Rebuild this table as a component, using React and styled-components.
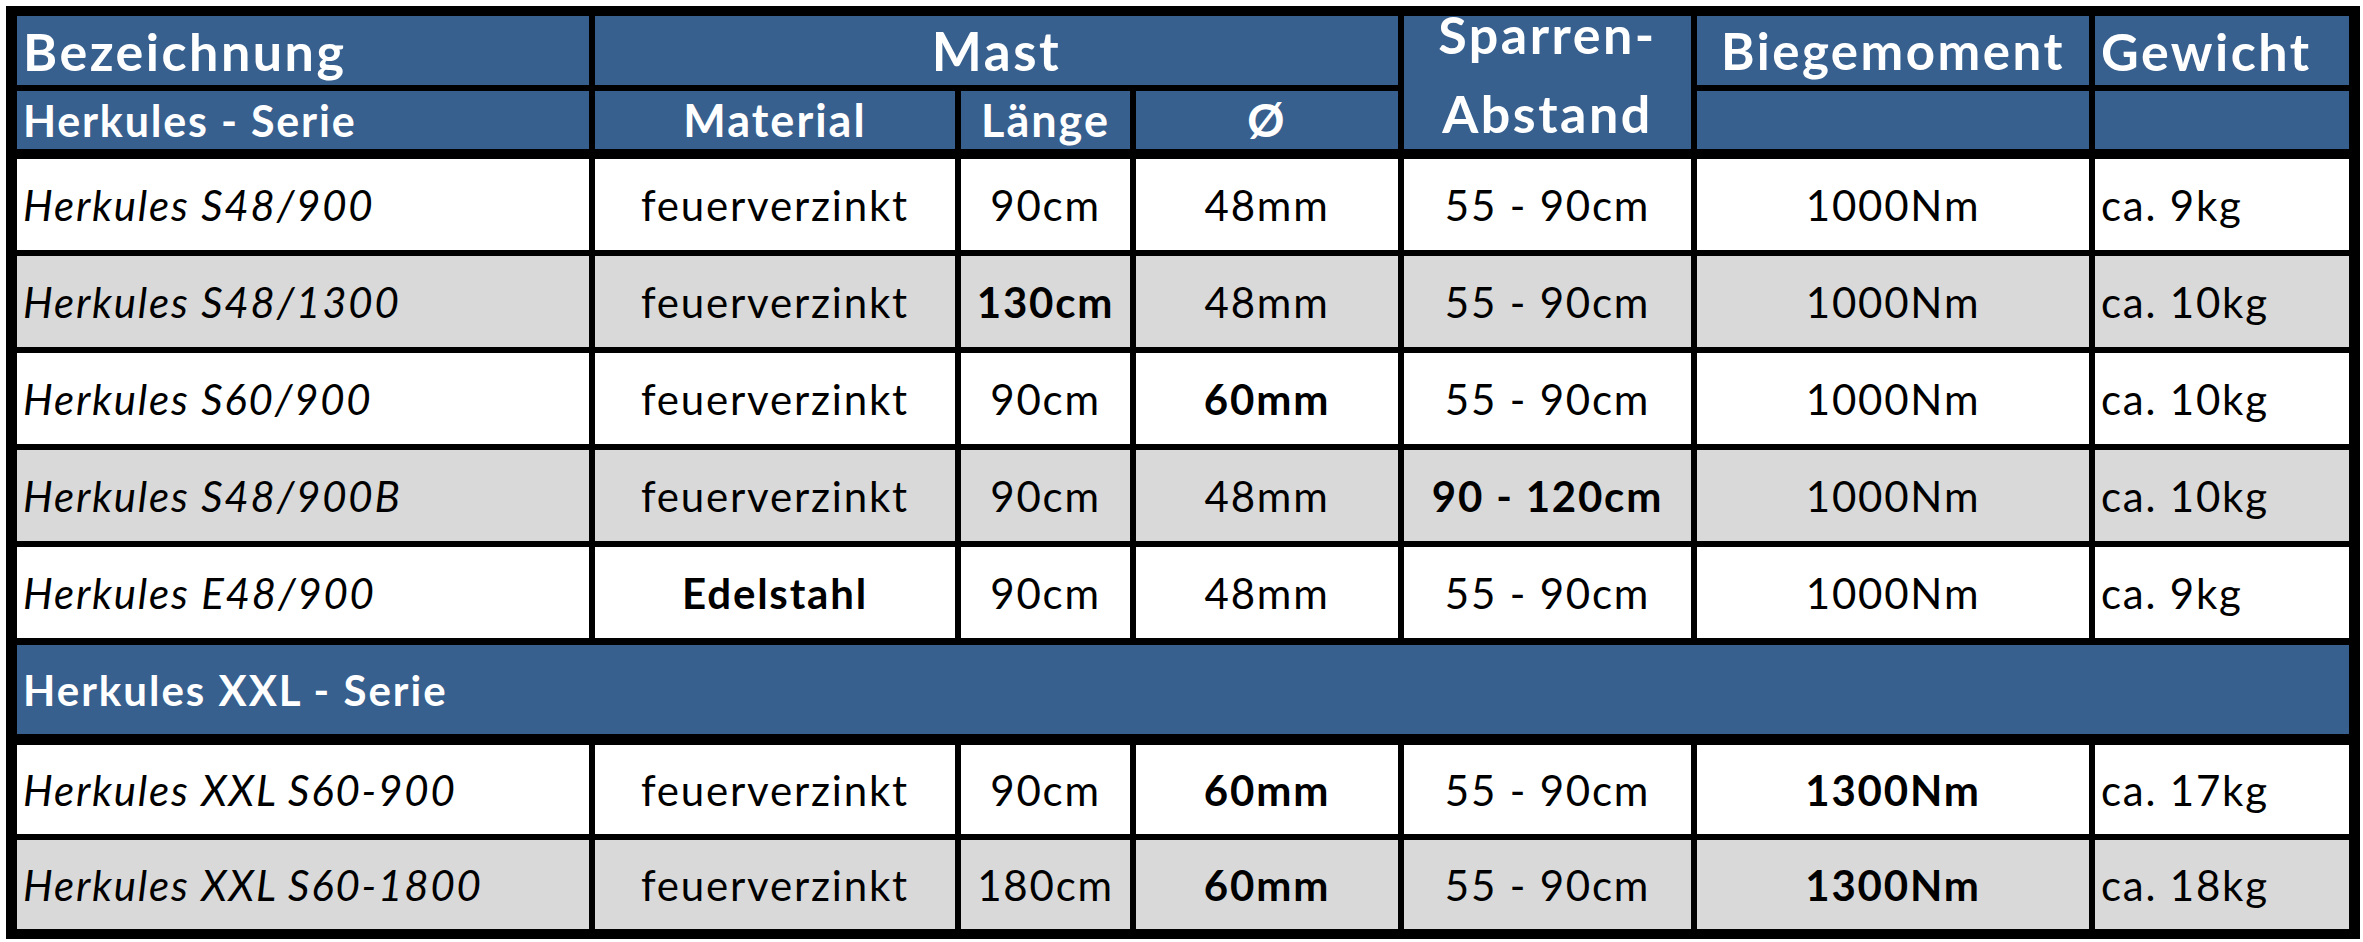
import React from "react";
import styled, { createGlobalStyle } from "styled-components";

const BLUE = "#37608f";
const GRAY = "#d9d9d9";
const COLS = "572px 360px 169px 262px 287px 392px 254px";

const GlobalStyle = createGlobalStyle`
  html, body {
    margin: 0;
    background: #ffffff;
  }
  body {
    font-family: Lato, "Open Sans", "Liberation Sans", sans-serif;
  }
`;

const Frame = styled.div`
  margin: 6px 0 0 6px;
  width: fit-content;
  background: #000;
  padding: 10px 11px;
  display: flex;
  flex-direction: column;
`;

const HeaderGrid = styled.div`
  display: grid;
  grid-template-columns: ${COLS};
  grid-template-rows: 69px 58px;
  gap: 6px;
`;

const HeadCell = styled.div`
  background: ${BLUE};
  color: #fff;
  font-weight: 700;
  font-size: ${(p) => p.$size || 48}px;
  letter-spacing: ${(p) => p.$ls ?? 2.5}px;
  line-height: 1;
  display: flex;
  flex-direction: column;
  justify-content: center;
  align-items: ${(p) => (p.$left ? "flex-start" : "center")};
  padding-left: ${(p) => (p.$left ? "6px" : "0")};
  padding-bottom: ${(p) => p.$pb || 0}px;
  box-sizing: border-box;
  grid-column: ${(p) => p.$col || "auto"};
  grid-row: ${(p) => p.$row || "auto"};
  white-space: nowrap;
`;

const StackLine = styled.span`
  display: block;
  line-height: 79px;
  height: 79px;
`;

const BodyGrid = styled.div`
  display: grid;
  grid-template-columns: ${COLS};
  grid-auto-rows: ${(p) => p.$h}px;
  gap: 6px;
  margin-top: ${(p) => p.$top}px;
`;

const Cell = styled.div`
  background: ${(p) => (p.$shade ? GRAY : "#fff")};
  color: #000;
  font-size: 42px;
  font-weight: ${(p) => (p.$bold ? 700 : 400)};
  font-style: ${(p) => (p.$italic ? "italic" : "normal")};
  letter-spacing: 1.8px;
  display: flex;
  align-items: center;
  justify-content: ${(p) => (p.$left ? "flex-start" : "center")};
  padding-left: ${(p) => (p.$left ? p.$left : 0)}px;
  white-space: nowrap;
`;

const SeriesBar = styled.div`
  background: ${BLUE};
  color: #fff;
  font-weight: 700;
  font-size: 42px;
  letter-spacing: 2px;
  height: ${(p) => p.$h}px;
  margin-top: ${(p) => p.$top}px;
  display: flex;
  align-items: center;
  padding-left: 6px;
  white-space: nowrap;
`;

const herkules = [
  { name: "Herkules S48/900", mat: "feuerverzinkt", len: "90cm", dia: "48mm", sp: "55 - 90cm", bm: "1000Nm", w: "ca. 9kg", b: [] },
  { name: "Herkules S48/1300", mat: "feuerverzinkt", len: "130cm", dia: "48mm", sp: "55 - 90cm", bm: "1000Nm", w: "ca. 10kg", b: ["len"] },
  { name: "Herkules S60/900", mat: "feuerverzinkt", len: "90cm", dia: "60mm", sp: "55 - 90cm", bm: "1000Nm", w: "ca. 10kg", b: ["dia"] },
  { name: "Herkules S48/900B", mat: "feuerverzinkt", len: "90cm", dia: "48mm", sp: "90 - 120cm", bm: "1000Nm", w: "ca. 10kg", b: ["sp"] },
  { name: "Herkules E48/900", mat: "Edelstahl", len: "90cm", dia: "48mm", sp: "55 - 90cm", bm: "1000Nm", w: "ca. 9kg", b: ["mat"] },
];

const xxl = [
  { name: "Herkules XXL S60-900", mat: "feuerverzinkt", len: "90cm", dia: "60mm", sp: "55 - 90cm", bm: "1300Nm", w: "ca. 17kg", b: ["dia", "bm"] },
  { name: "Herkules XXL S60-1800", mat: "feuerverzinkt", len: "180cm", dia: "60mm", sp: "55 - 90cm", bm: "1300Nm", w: "ca. 18kg", b: ["dia", "bm"] },
];

const Row = ({ r, shade }) => (
  <>
    <Cell $shade={shade} $italic $left={6}>{r.name}</Cell>
    {["mat", "len", "dia", "sp", "bm"].map((k) => (
      <Cell key={k} $shade={shade} $bold={r.b.includes(k)}>
        {r[k]}
      </Cell>
    ))}
    <Cell $shade={shade} $left={6}>{r.w}</Cell>
  </>
);

export default function App() {
  return (
    <>
      <GlobalStyle />
      <Frame>
        <HeaderGrid>
          <HeadCell $left $size={52} $col="1" $row="1">Bezeichnung</HeadCell>
          <HeadCell $size={53} $col="2 / 5" $row="1">Mast</HeadCell>
          <HeadCell $size={52} $col="5" $row="1 / 3" $pb={18}>
            <StackLine>Sparren-</StackLine>
            <StackLine>Abstand</StackLine>
          </HeadCell>
          <HeadCell $size={51} $col="6" $row="1">Biegemoment</HeadCell>
          <HeadCell $left $size={52} $col="7" $row="1">Gewicht</HeadCell>
          <HeadCell $left $size={43} $ls={1.8} $col="1" $row="2">Herkules - Serie</HeadCell>
          <HeadCell $size={45} $ls={2} $col="2" $row="2">Material</HeadCell>
          <HeadCell $size={45} $ls={2} $col="3" $row="2">Länge</HeadCell>
          <HeadCell $size={46} $col="4" $row="2">Ø</HeadCell>
          <HeadCell $col="6" $row="2" />
          <HeadCell $col="7" $row="2" />
        </HeaderGrid>

        <BodyGrid $h={91} $top={10}>
          {herkules.map((r, i) => (
            <Row key={r.name} r={r} shade={i % 2 === 1} />
          ))}
        </BodyGrid>

        <SeriesBar $h={89} $top={7}>Herkules XXL - Serie</SeriesBar>

        <BodyGrid $h={89} $top={11}>
          {xxl.map((r, i) => (
            <Row key={r.name} r={r} shade={i % 2 === 1} />
          ))}
        </BodyGrid>
      </Frame>
    </>
  );
}
